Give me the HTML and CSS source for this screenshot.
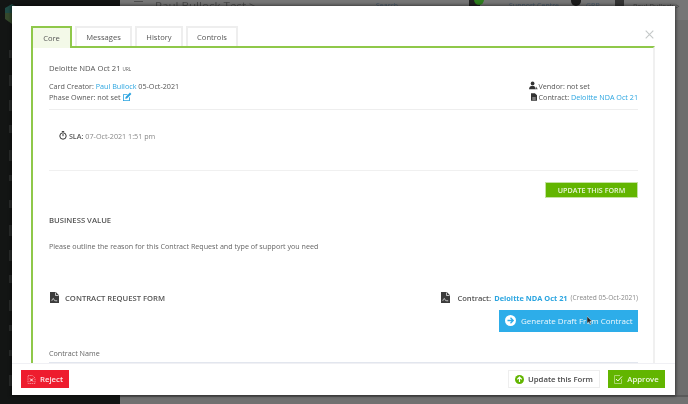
FILE: index.html
```html
<!DOCTYPE html>
<html lang="en">
<head>
<meta charset="utf-8">
<title>Contract Request</title>
<link rel="stylesheet" href="styles.css">
</head>
<body>
<div class="app">
  <aside class="sidebar">
    <svg class="logo" width="14" height="20" viewBox="0 0 14 20"><path d="M7 0 14 4V9H0V4Z" fill="#1f4a44"/><path d="M0 9H7V20L0 15Z" fill="#35492c"/><path d="M7 9H14V15L7 20Z" fill="#6e4828"/></svg>
    <div class="side-icons">
      <i></i><i class="tall"></i><i class="tall"></i><i></i><i class="tall"></i><i class="short"></i><i></i><i class="tall"></i><i class="tall"></i><i></i><i class="tall"></i><i class="short"></i><i class="short"></i><i class="tall"></i>
    </div>
  </aside>
  <main class="page">
    <header class="topbar">
      <span class="menu"></span>
      <span class="page-title">Paul Bullock Test &gt;</span>
      <span class="top-search">Search</span>
      <span class="top-bell"></span>
      <span class="top-link first">Support Centre</span>
      <span class="top-dot"></span>
      <span class="top-link second">GRP</span>
      <span class="top-avatar"></span>
      <span class="top-user">Paul Bullock &gt;</span>
    </header>
    <div class="page-rest"></div>
  </main>
</div>

<div class="modal">
  <div class="modal-body">
    <button class="close" aria-label="Close"><svg width="9" height="9" viewBox="0 0 9 9"><path d="M.7.7l7.6 7.6M8.300.7.700 8.300" stroke="#c4c8c8" stroke-width="1.100" fill="none"/></svg></button>
    <nav class="tabs">
      <a class="tab active">Core</a>
      <a class="tab">Messages</a>
      <a class="tab">History</a>
      <a class="tab">Controls</a>
    </nav>
    <section class="panel">
      <div class="card-name">Deloitte NDA Oct 21 <small>URL</small></div>
      <div class="meta">
        <div class="meta-left">
          <div>Card Creator: <a>Paul Bullock</a> 05-Oct-2021</div>
          <div>Phase Owner: not set
            <svg class="ico-edit" width="10" height="10" viewBox="0 0 10 10"><path d="M1 2.200h5L5 3.100H1.800v5.200h5.200V5.800l.9-1v4.300H1z" fill="#29a3e0"/><path d="M3.600 5 8 .6l1.400 1.400L5 6.400l-1.800.4z" fill="#29a3e0"/></svg>
          </div>
        </div>
        <div class="meta-right">
          <div class="meta-line"><svg class="ico-user" width="9" height="9" viewBox="0 0 10 9"><circle cx="4" cy="2.200" r="2.100" fill="#333"/><path d="M0 8.800C0 6 1.800 4.800 4 4.800S7 6 7 8.800z" fill="#333"/><path d="M7.800 5.500 9.800 8.800H6.800z" fill="#555"/></svg>Vendor: not set</div>
          <div class="meta-line"><svg class="ico-doc" width="6" height="8" viewBox="0 0 7 9"><path d="M0 0h4.500L7 2.500V9H0z" fill="#333"/><path d="M1.500 5.500h4M1.500 7h4" stroke="#fff" stroke-width=".7"/></svg>Contract: <a>Deloitte NDA Oct 21</a></div>
        </div>
      </div>
      <div class="sla-row">
        <svg class="ico-watch" width="8" height="9" viewBox="0 0 8 9"><circle cx="4" cy="5" r="3.200" fill="none" stroke="#333" stroke-width="1"/><path d="M2.800.6h2.400M4 3v2.200" stroke="#333" stroke-width="1" fill="none"/></svg>
        <b>SLA:</b> <span>07-Oct-2021 1:51 pm</span>
      </div>
      <div class="action-row">
        <button class="btn-update">UPDATE THIS FORM</button>
      </div>
      <h3 class="section-title">BUSINESS VALUE</h3>
      <p class="section-text">Please outline the reason for this Contract Request and type of support you need</p>
      <div class="form-head">
        <div class="form-title">
          <svg width="9" height="11" viewBox="0 0 9 11"><path d="M0 0h5.800L9 3.200V11H0z" fill="#3c3c3c"/><path d="M5.500.5v3h3" fill="none" stroke="#fff" stroke-width=".7"/><path d="M1.800 8.800c1-2.500 1.500-3 2-1.500s1.200 1.500 3.400 1.500" fill="none" stroke="#fff" stroke-width=".7"/></svg>
          <span>CONTRACT REQUEST FORM</span>
        </div>
        <div class="form-side">
          <div class="form-contract">
            <svg width="9" height="11" viewBox="0 0 9 11"><path d="M0 0h5.800L9 3.200V11H0z" fill="#3c3c3c"/><path d="M5.500.5v3h3" fill="none" stroke="#fff" stroke-width=".7"/><path d="M1.800 8.800c1-2.500 1.500-3 2-1.500s1.200 1.500 3.400 1.500" fill="none" stroke="#fff" stroke-width=".7"/></svg>
            <b>Contract:</b> <a>Deloitte NDA Oct 21</a> <small>(Created 05-Oct-2021)</small>
          </div>
          <button class="btn-generate">
            <svg width="11" height="11" viewBox="0 0 11 11"><circle cx="5.500" cy="5.500" r="5.500" fill="#fff"/><path d="M2.500 5.500h5.500M5.500 2.800l2.700 2.700-2.700 2.700" fill="none" stroke="#2dade9" stroke-width="1.300"/></svg>
            <span>Generate Draft From Contract</span>
          </button>
        </div>
      </div>
      <label class="field-label">Contract Name</label>
      <div class="field-input"></div>
    </section>
    <svg class="cursor" width="6" height="9" viewBox="0 0 7 10"><path d="M0 0v8.500l2-1.800L3.500 10l1.300-.6-1.500-3.200H6z" fill="#222" stroke="#fff" stroke-width=".5"/></svg>
  </div>
  <footer class="modal-foot">
    <button class="btn btn-reject">
      <svg width="9" height="9" viewBox="0 0 8 9"><path d="M.5.500h4.500L7.500 3v5.500H.5z" fill="none" stroke="#f7a0a8" stroke-width=".8" stroke-dasharray="1.500 .7"/><path d="M2.500 3.500l3 3M5.500 3.500l-3 3" stroke="#fff" stroke-width="1"/></svg>
      Reject
    </button>
    <div class="foot-right">
      <button class="btn btn-form">
        <svg width="9" height="9" viewBox="0 0 9 9"><circle cx="4.500" cy="4.500" r="4.500" fill="#62b500"/><path d="M4.500 7V2M2.200 4.300 4.500 2l2.300 2.300" fill="none" stroke="#fff" stroke-width="1.200"/></svg>
        Update this Form
      </button>
      <button class="btn btn-approve">
        <svg width="9" height="9" viewBox="0 0 9 9"><path d="M.5.500h5.500M.5.500v8h7V4" fill="none" stroke="#bde08a" stroke-width=".8"/><path d="M2 4l1.800 2L8 1.500" fill="none" stroke="#fff" stroke-width="1"/></svg>
        Approve
      </button>
    </div>
  </footer>
</div>
</body>
</html>
```
FILE: styles.css
```css
* { box-sizing: border-box; }
html, body { margin: 0; height: 100%; overflow: hidden; }
body {
  width: 688px;
  height: 404px;
  font-family: "Open Sans", "Noto Sans", sans-serif;
  font-size: 7.200px;
  color: #555;
  background: #6d6d6d;
  position: relative;
  filter: blur(.45px);
}
button { font-family: inherit; border: 0; padding: 0; cursor: pointer; }
a { color: #2ba5e0; }

.app { display: flex; height: 404px; }
.sidebar { width: 120px; background: #131514; padding: 4px 0 0 5px; flex: none; }
.logo { display: block; }
.side-icons { display: grid; grid-auto-rows: 25px; margin-top: 26px; padding-left: 4px; }
.side-icons i { display: block; width: 4px; height: 8px; background: #2a2c2b; }
.side-icons i.tall { height: 11px; }
.side-icons i.short { height: 6px; }

.page { flex: 1; display: flex; flex-direction: column; background: #6f6f6f; }
.topbar { display: flex; align-items: flex-start; height: 20px; flex: none; background: #767676; padding-left: 14px; overflow: hidden; }
.page-rest { flex: 1; border-bottom: 7px solid #717171; box-shadow: inset 0 -2px 0 #5a5a5a; background: #6d6d6d; }
.menu { width: 9px; height: 6px; margin-top: 1px; border-top: 1px solid #4e4e4e; border-bottom: 1px solid #4e4e4e; flex: none; }
.page-title { font-size: 11.600px; color: #4b4b4b; margin-left: 12px; line-height: 11px; width: 103px; white-space: nowrap; flex: none; }
.top-search { margin-left: 118px; width: 24px; color: #46586a; font-size: 7px; line-height: 12px; flex: none; }
.top-bell { width: 11px; height: 6px; background: #222; margin-left: 69px; position: relative; flex: none; }
.top-bell::after { content: ""; position: absolute; left: 5px; top: -6px; width: 10px; height: 11px; border-radius: 50%; background: #2e7d1e; }
.top-link { color: #46586a; font-size: 7px; line-height: 12px; white-space: nowrap; flex: none; }
.top-link.first { margin-left: 29px; width: 48px; }
.top-dot { width: 10px; height: 6px; border-radius: 0 0 5px 5px; background: #1c1c1c; margin-left: 14px; flex: none; }
.top-link.second { margin-left: 5px; width: 15px; }
.top-avatar { width: 9px; height: 6px; margin-left: 14px; background: #333; flex: none; }
.top-user { color: #454545; margin-left: 9px; font-size: 7.200px; line-height: 12px; white-space: nowrap; flex: none; }

.modal {
  position: absolute;
  left: 12px;
  top: 6px;
  width: 663px;
  height: 389px;
  background: #fff;
  box-shadow: 0 0 3px 1px rgba(0,0,0,.5);
  display: flex;
  flex-direction: column;
}
.modal-body { flex: 1; min-height: 0; overflow: hidden; padding: 20px 20px 0 19px; position: relative; }
.close { position: absolute; top: 24px; right: 21px; background: none; line-height: 0; }

.tabs { display: flex; gap: 3px; height: 20px; padding-left: 1px; align-items: flex-start; }
.tab { display: flex; align-items: center; justify-content: center; height: 20px; color: #555; border: 2px solid #eee; border-bottom: 0; font-size: 7.600px; flex: none; }
.tab:nth-child(1) { width: 40px; }
.tab:nth-child(2) { width: 57px; }
.tab:nth-child(3) { width: 48px; }
.tab:nth-child(4) { width: 52px; }
.tab.active { background: #f3f9e8; border-color: #8fc84a; margin-left: -1px; width: 41px; height: 22px; position: relative; z-index: 1; }

.panel {
  border-top: 2px solid #8fc84a;
  border-left: 2px solid #8fc84a;
  border-right: 2px solid #f0f0f0;
  padding: 13px 15px 0 16px;
}
.card-name { font-size: 7.700px; line-height: 14px; color: #555; }
.card-name small { font-size: 4.500px; }
.meta { display: flex; justify-content: space-between; margin-top: 4.500px; padding-bottom: 5.500px; border-bottom: 1px solid #eee; line-height: 11.400px; }
.ico-edit { vertical-align: -2px; }
.meta-line svg { vertical-align: -1px; margin-right: 1px; }
.meta-line .ico-doc { margin-left: 2px; margin-right: 2px; }
.sla-row { padding: 19.500px 0 26.500px 10px; line-height: 14px; border-bottom: 1px solid #f0f0f0; color: #888; }
.sla-row b { color: #555; font-weight: 600; }
.ico-watch { vertical-align: -1px; }
.action-row { display: flex; justify-content: flex-end; margin-top: 11px; }
.btn-update { width: 93px; height: 16px; background: #62b500; border: 1px solid #c4e2a0; color: #eaf6da; font-size: 7.150px; font-weight: 600; }
.section-title { margin: 16px 0 0; font-size: 7.700px; line-height: 12px; font-weight: 600; color: #555; }
.section-text { margin: 14px 0 0; line-height: 12px; font-size: 7.150px; color: #666; }
.form-head { display: flex; justify-content: space-between; margin-top: 40px; align-items: flex-start; }
.form-title { display: flex; align-items: center; gap: 6px; font-weight: 600; font-size: 7.660px; color: #555; line-height: 12px; padding-left: 1px; }
.form-side { display: flex; flex-direction: column; align-items: flex-end; gap: 6px; }
.form-contract { line-height: 12px; font-size: 7.600px; display: flex; align-items: center; gap: 3px; white-space: nowrap; }
.form-contract svg { margin-right: 4px; }
.form-contract b { font-weight: 600; color: #555; }
.form-contract a { font-weight: 700; color: #2ba5e0; font-size: 7.400px; }
.form-contract small { font-size: 6.600px; color: #888; }
.btn-generate { display: flex; align-items: center; gap: 5px; width: 139px; height: 22px; padding-left: 6px; background: #2dade9; color: #eef8fd; font-size: 8px; white-space: nowrap; }
.field-label { display: block; margin-top: 15px; line-height: 12px; font-size: 7.200px; color: #666; }
.field-input { height: 20px; margin-top: 3px; border: 1px solid #e2e6ee; }
.cursor { position: absolute; left: 575px; top: 310px; }

.modal-foot { flex: none; height: 32px; border-top: 1px solid #f0f0f4; display: flex; justify-content: space-between; align-items: flex-start; padding: 6px 10px 0 9px; background: #fff; }
.foot-right { display: flex; gap: 8px; }
.btn { display: flex; align-items: center; justify-content: center; gap: 4px; height: 18px; font-size: 7.750px; font-weight: 600; }
.btn-reject { width: 48px; background: #ee1c2e; color: #fde4e6; }
.btn-form { width: 92px; background: #fff; border: 1px solid #eee; color: #4a4a4a; }
.btn-approve { width: 57px; background: #62b500; color: #eef8e0; }
```
